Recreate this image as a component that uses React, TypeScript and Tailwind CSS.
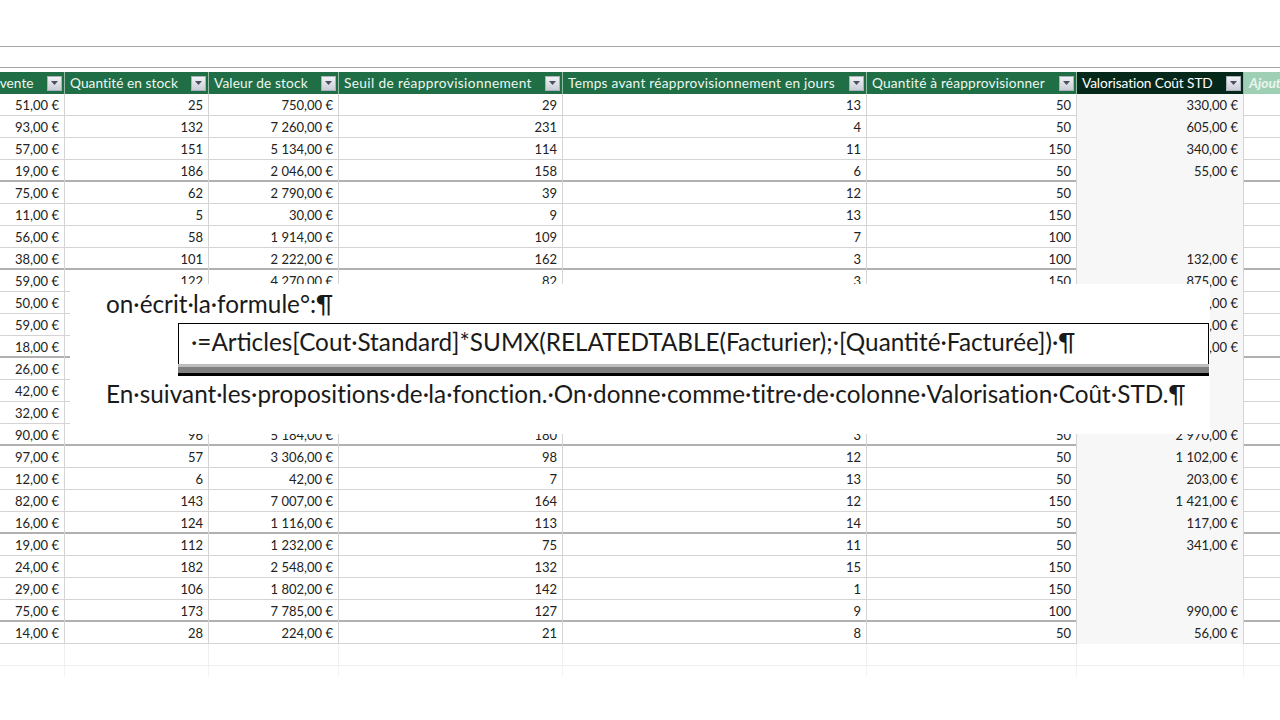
import React from 'react';

type Row = [string, string, string, string, string, string, string];

// hidden rows sit behind the pasted text block, only their edges show
const rows: Row[] = [
  ['51,00 €', '25', '750,00 €', '29', '13', '50', '330,00 €'],
  ['93,00 €', '132', '7 260,00 €', '231', '4', '50', '605,00 €'],
  ['57,00 €', '151', '5 134,00 €', '114', '11', '150', '340,00 €'],
  ['19,00 €', '186', '2 046,00 €', '158', '6', '50', '55,00 €'],
  ['75,00 €', '62', '2 790,00 €', '39', '12', '50', ''],
  ['11,00 €', '5', '30,00 €', '9', '13', '150', ''],
  ['56,00 €', '58', '1 914,00 €', '109', '7', '100', ''],
  ['38,00 €', '101', '2 222,00 €', '162', '3', '100', '132,00 €'],
  ['59,00 €', '122', '4 270,00 €', '82', '3', '150', '875,00 €'],
  ['50,00 €', '', '', '', '', '', '250,00 €'],
  ['59,00 €', '', '', '', '', '', '420,00 €'],
  ['18,00 €', '', '', '', '', '', '160,00 €'],
  ['26,00 €', '', '', '', '', '', ''],
  ['42,00 €', '', '', '', '', '', ''],
  ['32,00 €', '', '', '', '', '', ''],
  ['90,00 €', '96', '5 184,00 €', '180', '3', '50', '2 970,00 €'],
  ['97,00 €', '57', '3 306,00 €', '98', '12', '50', '1 102,00 €'],
  ['12,00 €', '6', '42,00 €', '7', '13', '50', '203,00 €'],
  ['82,00 €', '143', '7 007,00 €', '164', '12', '150', '1 421,00 €'],
  ['16,00 €', '124', '1 116,00 €', '113', '14', '50', '117,00 €'],
  ['19,00 €', '112', '1 232,00 €', '75', '11', '50', '341,00 €'],
  ['24,00 €', '182', '2 548,00 €', '132', '15', '150', ''],
  ['29,00 €', '106', '1 802,00 €', '142', '1', '150', ''],
  ['75,00 €', '173', '7 785,00 €', '127', '9', '100', '990,00 €'],
  ['14,00 €', '28', '224,00 €', '21', '8', '50', '56,00 €'],
];

const headers = [
  { label: 'Prix de vente', cls: '' },
  { label: 'Quantité en stock', cls: 'tracking-[0.05px]' },
  { label: 'Valeur de stock', cls: 'tracking-[0.13px]' },
  { label: 'Seuil de réapprovisionnement', cls: 'tracking-[0.36px]' },
  { label: 'Temps avant réapprovisionnement en jours', cls: 'tracking-[0.25px]' },
  { label: 'Quantité à réapprovisionner', cls: 'tracking-[0.18px]' },
];

const cols = 'grid grid-cols-[115px_144px_130px_224px_304px_210px_167px_80px]';

const FilterButton = () => (
  <span className="ml-auto flex h-[15px] w-[15px] shrink-0 items-center justify-center border border-[#a9b2bb] bg-gradient-to-b from-[#f2f3f6] to-[#c9cdd6]">
    <svg width="7" height="4" viewBox="0 0 7 4">
      <path d="M0 0h7L3.500 4z" fill="#4a515c" />
    </svg>
  </span>
);

const App: React.FC = () => {
  return (
    <div className="relative h-[720px] w-[1280px] overflow-hidden bg-white font-['Lato','Liberation_Sans',sans-serif] text-[13px] text-[#222]">
      <div className="h-[47px] border-b border-[#a6a6a6]" />
      <div className="mt-[20px] h-[5px] border-t border-[#a6a6a6]" />

      <div className="-ml-[50px] w-[1374px]">
        {/* header */}
        <div className={`${cols} h-[22px] text-[13.700px] text-[#eef6f1]`}>
          {headers.map((h) => (
            <div key={h.label} className="flex items-center gap-1 border-r border-[#8fbca3] bg-[#1f6e46] pr-[2px] pl-[5px]">
              <span className={`whitespace-nowrap ${h.cls}`}>{h.label}</span>
              <FilterButton />
            </div>
          ))}
          <div className="flex items-center border-r border-[#8fbca3] bg-[#06281b] pr-[2px] pl-[5px] text-white">
            <span className="whitespace-nowrap -tracking-[0.1px]">Valorisation Coût STD</span>
            <FilterButton />
          </div>
          <div className="flex items-center bg-[#9fd0b5] pl-[5px] font-bold text-[#eaf5ef] italic">
            <span className="whitespace-nowrap">Ajouter une colonne</span>
          </div>
        </div>

        {/* rows, every fourth one closes with a heavier line */}
        {rows.map((r, i) => (
          <div
            key={i}
            className={`${cols} h-[22px] border-b ${i % 4 === 3 ? 'border-b-2 border-[#b0b0b0]' : 'border-[#d4d4d4]'}`}
          >
            {r.map((v, j) => (
              <div
                key={j}
                className={`flex items-center justify-end border-r border-[#d4d4d4] pt-[2px] pr-[5px] whitespace-nowrap ${j === 6 ? 'bg-[#f7f7f7]' : ''}`}
              >
                {v}
              </div>
            ))}
            <div />
          </div>
        ))}

        {/* empty rows fading out under the table */}
        <div className={`${cols} h-[22px] border-b border-[#efefef]`}>
          {[0, 1, 2, 3, 4, 5, 6].map((k) => (
            <div key={k} className="border-r border-[#efefef]" />
          ))}
        </div>
        <div className={`${cols} h-[10px]`}>
          {[0, 1, 2, 3, 4, 5, 6].map((k) => (
            <div key={k} className="border-r border-[#f3f3f3]" />
          ))}
        </div>
      </div>

      {/* pasted text block over the table */}
      <div className="absolute top-[284px] left-[70px] flex h-[150px] w-[1140px] flex-col bg-white text-[24.300px] leading-none text-[#1a1a1a]">
        <p className="mt-[8px] ml-[36px] h-[31px] whitespace-nowrap">on·écrit·la·formule°:¶</p>
        <div className="ml-[108px] w-[1031px]">
          <div className="flex h-[41px] items-center border-x border-t border-black pb-[3px] pl-[12px] whitespace-nowrap">
            ·=Articles[Cout·Standard]*SUMX(RELATEDTABLE(Facturier);·[Quantité·Facturée])·¶
          </div>
          <div className="h-[3px] bg-[#bdbdbd]" />
          <div className="h-[6px] bg-[#808080]" />
          <div className="h-[3px] bg-black" />
        </div>
        <p className="mt-[6px] ml-[36px] tracking-[0.04px] whitespace-nowrap">
          En·suivant·les·propositions·de·la·fonction.·On·donne·comme·titre·de·colonne·Valorisation·Coût·STD.¶
        </p>
      </div>
    </div>
  );
};

export default App;
